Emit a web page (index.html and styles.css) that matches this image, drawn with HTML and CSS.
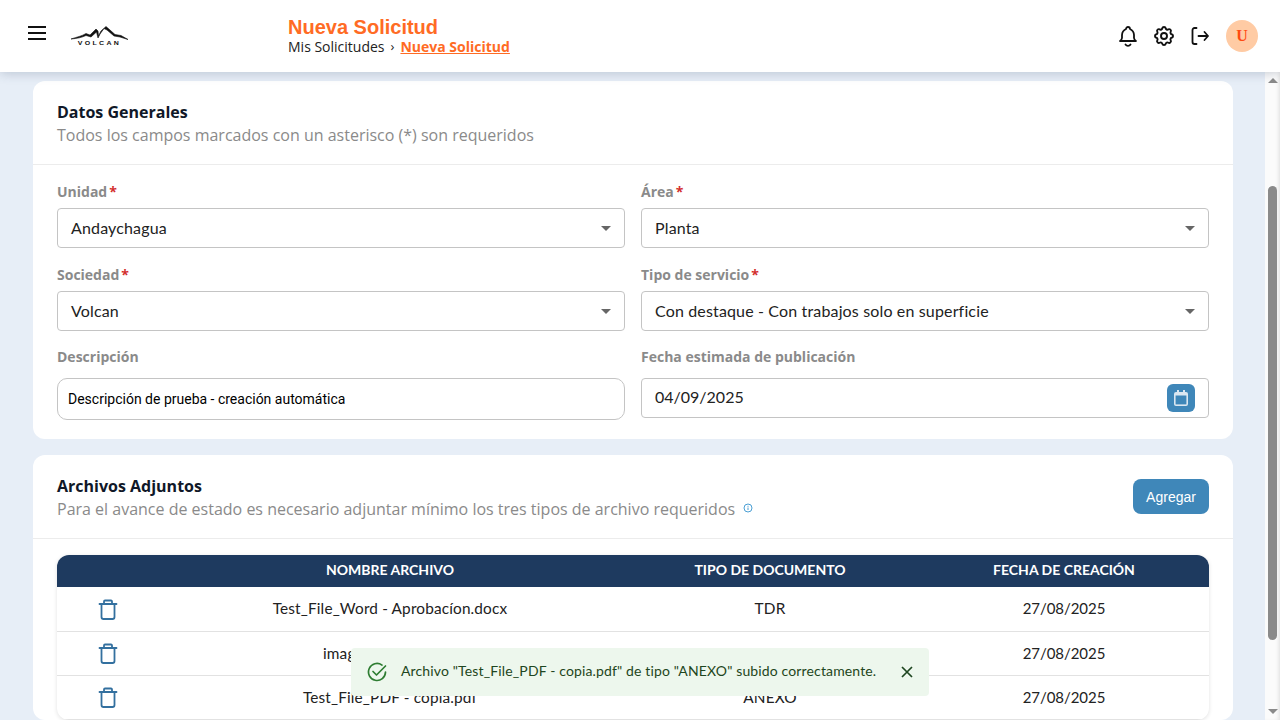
FILE: index.html
```html
<!DOCTYPE html>
<html lang="es">
<head>
<meta charset="utf-8">
<title>Nueva Solicitud</title>
<link rel="stylesheet" href="styles.css">
</head>
<body>
<div class="app">
  <header class="topbar">
    <div class="brand">
      <svg class="menu-icon" viewBox="0 0 18 14" width="18" height="14"><path d="M0 1h18M0 7h18M0 13h18" stroke="#111" stroke-width="2"/></svg>
      <div class="logo">
        <svg viewBox="0 0 57 15" width="57" height="15"><path d="M0 14C6 12 11 11 15 8.500L19 10 25 4 27 6 27.500 11 30 6 35 1.500 39 5 44 9.500 50 10.500 57 14.500 49 12 43 11 36 5 33 3.500 29 9 27 13 25.500 7 20 12 15 10.500C11 12.500 6 13.500 0 14Z" fill="#111" stroke="#111" stroke-width=".6"/></svg>
        <span class="logo-text">VOLCAN</span>
      </div>
    </div>
    <div class="heading">
      <h1 class="page-title">Nueva Solicitud</h1>
      <nav class="crumbs"><span>Mis Solicitudes</span><span class="crumb-sep">›</span><a class="crumb-current">Nueva Solicitud</a></nav>
    </div>
    <div class="actions">
      <svg class="action" viewBox="0 0 24 24" width="24" height="24" fill="none" stroke="#111" stroke-width="1.800" stroke-linecap="round" stroke-linejoin="round"><path d="M10 5a2 2 0 1 1 4 0 7 7 0 0 1 4 6v3a4 4 0 0 0 2 3H4a4 4 0 0 0 2-3v-3a7 7 0 0 1 4-6"/><path d="M9.500 20.500a3 3 0 0 0 5 0"/></svg>
      <svg class="action" viewBox="0 0 24 24" width="24" height="24" fill="none" stroke="#111" stroke-width="1.900" stroke-linecap="round" stroke-linejoin="round"><path d="M10.300 4.300c.4-1.800 3-1.800 3.400 0a1.700 1.700 0 0 0 2.600 1.100c1.500-.9 3.300.8 2.400 2.400a1.700 1.700 0 0 0 1 2.500c1.800.4 1.800 3 0 3.400a1.700 1.700 0 0 0-1 2.600c.9 1.500-.9 3.300-2.400 2.400a1.700 1.700 0 0 0-2.600 1c-.4 1.800-3 1.800-3.400 0a1.700 1.700 0 0 0-2.600-1c-1.500.9-3.300-.9-2.400-2.400a1.700 1.700 0 0 0-1-2.600c-1.800-.4-1.800-3 0-3.400a1.700 1.700 0 0 0 1-2.500c-.9-1.600.9-3.300 2.400-2.400a1.700 1.700 0 0 0 2.600-1.100Z"/><circle cx="12" cy="12" r="3"/></svg>
      <svg class="action" viewBox="0 0 24 24" width="24" height="24" fill="none" stroke="#111" stroke-width="1.800" stroke-linecap="round" stroke-linejoin="round"><path d="M8.500 4H6.500a2 2 0 0 0-2 2v12a2 2 0 0 0 2 2h2"/><path d="M10.500 12H20M16.500 8l3.500 4-3.500 4"/></svg>
      <div class="avatar">U</div>
    </div>
  </header>

  <div class="viewport">
    <main class="content">
      <section class="card card-form">
        <div class="card-head">
          <div>
            <h2 class="card-title">Datos Generales</h2>
            <p class="card-sub">Todos los campos marcados con un asterisco (*) son requeridos</p>
          </div>
        </div>
        <div class="form-grid">
          <div class="field">
            <label class="label">Unidad<span class="req">*</span></label>
            <div class="control select"><span>Andaychagua</span><i class="caret"></i></div>
          </div>
          <div class="field">
            <label class="label">Área<span class="req">*</span></label>
            <div class="control select"><span>Planta</span><i class="caret"></i></div>
          </div>
          <div class="field">
            <label class="label">Sociedad<span class="req">*</span></label>
            <div class="control select"><span>Volcan</span><i class="caret"></i></div>
          </div>
          <div class="field">
            <label class="label">Tipo de servicio<span class="req">*</span></label>
            <div class="control select"><span>Con destaque - Con trabajos solo en superficie</span><i class="caret"></i></div>
          </div>
          <div class="field field-last">
            <label class="label">Descripción</label>
            <div class="control textbox"><span>Descripción de prueba - creación automática</span></div>
          </div>
          <div class="field field-last">
            <label class="label">Fecha estimada de publicación</label>
            <div class="control date"><span>04/09/2025</span>
              <button class="cal-btn" type="button" aria-label="Calendario">
                <svg viewBox="0 0 14 16" width="14" height="16"><path d="M2 2h10a2 2 0 0 1 2 2v10a2 2 0 0 1-2 2H2a2 2 0 0 1-2-2V4a2 2 0 0 1 2-2Z" fill="#dbe7f1"/><rect x="3" y="0" width="2" height="3" fill="#dbe7f1"/><rect x="9" y="0" width="2" height="3" fill="#dbe7f1"/><rect x="1.600" y="5.500" width="10.800" height="8.900" fill="#3f87b9"/></svg>
              </button>
            </div>
          </div>
        </div>
      </section>

      <section class="card card-files">
        <div class="card-head files-head">
          <div>
            <h2 class="card-title">Archivos Adjuntos</h2>
            <p class="card-sub">Para el avance de estado es necesario adjuntar mínimo los tres tipos de archivo requeridos
              <svg class="info" viewBox="0 0 10 10" width="10" height="10" fill="none" stroke="#4a9fd4" stroke-width="1"><circle cx="5" cy="5" r="4"/><path d="M5 4.500V7M5 2.800v1"/></svg>
            </p>
          </div>
          <button class="add-btn" type="button">Agregar</button>
        </div>
        <div class="table-wrap">
          <div class="table">
            <div class="row row-head"><div></div><div>NOMBRE ARCHIVO</div><div>TIPO DE DOCUMENTO</div><div>FECHA DE CREACIÓN</div></div>
            <div class="row">
              <div class="cell-action"><svg class="trash" viewBox="0 0 20 22" width="20" height="22" fill="none" stroke="#33709f" stroke-width="1.800" stroke-linecap="round" stroke-linejoin="round"><path d="M1.500 5h17M3.500 5v13a2 2 0 0 0 2 2h9a2 2 0 0 0 2-2V5M6 5V2.500a1 1 0 0 1 1-1h6a1 1 0 0 1 1 1V5"/></svg></div>
              <div>Test_File_Word - Aprobacíon.docx</div><div>TDR</div><div class="cell-date">27/08/2025</div>
            </div>
            <div class="row">
              <div class="cell-action"><svg class="trash" viewBox="0 0 20 22" width="20" height="22" fill="none" stroke="#33709f" stroke-width="1.800" stroke-linecap="round" stroke-linejoin="round"><path d="M1.500 5h17M3.500 5v13a2 2 0 0 0 2 2h9a2 2 0 0 0 2-2V5M6 5V2.500a1 1 0 0 1 1-1h6a1 1 0 0 1 1 1V5"/></svg></div>
              <div>imagen_prueba.png</div><div>BASES</div><div class="cell-date">27/08/2025</div>
            </div>
            <div class="row">
              <div class="cell-action"><svg class="trash" viewBox="0 0 20 22" width="20" height="22" fill="none" stroke="#33709f" stroke-width="1.800" stroke-linecap="round" stroke-linejoin="round"><path d="M1.500 5h17M3.500 5v13a2 2 0 0 0 2 2h9a2 2 0 0 0 2-2V5M6 5V2.500a1 1 0 0 1 1-1h6a1 1 0 0 1 1 1V5"/></svg></div>
              <div>Test_File_PDF - copia.pdf</div><div>ANEXO</div><div class="cell-date">27/08/2025</div>
            </div>
          </div>
        </div>
      </section>
    </main>
    <div class="scrollbar"><i class="arrow-up"></i><i class="thumb"></i><i class="arrow-down"></i></div>
  </div>

  <div class="toast">
    <svg class="toast-icon" viewBox="0 0 20 20" width="20" height="20" fill="none" stroke="#2e7d32" stroke-width="1.700" stroke-linecap="round" stroke-linejoin="round"><path d="M18.500 10a8.500 8.500 0 1 1-3.500-6.900"/><path d="M6 9.500l3.500 3.500 9-9"/></svg>
    <span class="toast-msg">Archivo "Test_File_PDF - copia.pdf" de tipo "ANEXO" subido correctamente.</span>
    <svg class="toast-close" viewBox="0 0 12 12" width="12" height="12" fill="none" stroke="#1e4620" stroke-width="1.700"><path d="M1 1l10 10M11 1L1 11"/></svg>
  </div>
</div>
</body>
</html>
```
FILE: styles.css
```css
* { box-sizing: border-box; }
html, body { margin: 0; height: 100%; overflow: hidden; }
body { font-family: "Open Sans", sans-serif; color: #111; background: #e7eef7; }
.app { width: 1280px; height: 720px; display: flex; flex-direction: column; position: relative; overflow: hidden; }

.topbar { height: 72px; flex: none; background: #fff; display: flex; align-items: center; padding: 0 22px 0 28px; box-shadow: 0 2px 10px rgba(50, 70, 100, .22); position: relative; z-index: 2; }
.brand { width: 260px; display: flex; align-items: center; gap: 25px; margin-top: -6px; }
.menu-icon { display: block; }
.logo { width: 57px; display: flex; flex-direction: column; align-items: center; margin-top: 4px; }
.logo svg { display: block; }
.logo-text { font: 700 7px/6px "Liberation Sans", sans-serif; letter-spacing: 2.300px; color: #111; transform: scaleY(.8); }
.heading { flex: 1; margin-top: -1px; }
.page-title { margin: 1px 0 -1px; font: 700 20px/22px "Liberation Sans", sans-serif; color: #ff6b24; }
.crumbs { display: flex; align-items: center; font-size: 14px; line-height: 19px; color: #222; }
.crumb-sep { margin: 0 6px; font-size: 13px; }
.crumb-current { color: #ff6b24; font-weight: 700; text-decoration: underline; }
.actions { display: flex; align-items: center; gap: 12px; }
.action { display: block; }
.avatar { width: 32px; height: 32px; margin-left: 2px; border-radius: 50%; background: #ffcba4; color: #ff4a10; display: flex; align-items: center; justify-content: center; font: 700 16px "Liberation Serif", serif; }

.viewport { flex: 1; min-height: 0; display: flex; }
.content { flex: 1; min-width: 0; overflow: hidden; padding: 9px 32px 0 33px; }
.card { background: #fff; border-radius: 12px; }
.card-form { height: 358px; margin-bottom: 16px; }
.card-head { padding: 19px 24px 16px 24px; border-bottom: 1px solid #ececec; height: 84px; }
.card-title { margin: 0; font-size: 16px; line-height: 24px; font-weight: 700; color: #101828; }
.card-sub { margin: 0; font-size: 16px; line-height: 23px; color: #8a8a8a; }
.form-grid { display: grid; grid-template-columns: 568px 568px; column-gap: 16px; padding: 17px 24px 0; }
.field { height: 83px; display: flex; flex-direction: column; }
.field-last { height: auto; }
.label { font-size: 14px; line-height: 20px; font-weight: 700; color: #8a8a8a; margin-bottom: 6px; }
.req { color: #d32f2f; margin-left: 2px; }
.control { height: 40px; border: 1px solid #c4c4c4; border-radius: 4px; display: flex; align-items: center; padding: 0 13px; font-family: "Lato", sans-serif; font-size: 16px; letter-spacing: .15px; color: #222; }
.select { justify-content: space-between; padding-right: 13px; }
.select span { margin-bottom: 2px; }
.caret { width: 0; height: 0; border-left: 5px solid transparent; border-right: 5px solid transparent; border-top: 5px solid #666; }
.field-last .label { margin-bottom: 11px; margin-top: -1px; }
.textbox { height: 42px; border-radius: 10px; padding: 0 10px; font: 14px "Roboto", sans-serif; letter-spacing: 0; color: #000; }
.date { justify-content: space-between; padding-right: 13px; letter-spacing: 0; }
.date span { margin-bottom: 4px; }
.cal-btn { width: 28px; height: 28px; border: 0; border-radius: 6px; background: #3f87b9; padding: 0; display: flex; align-items: center; justify-content: center; }

.files-head { display: flex; justify-content: space-between; align-items: flex-start; }
.info { vertical-align: 2px; margin-left: 4px; }
.add-btn { width: 76px; height: 35px; margin-top: 5px; border: 0; border-radius: 8px; background: #3f87b9; color: #fff; font: 14px "Liberation Sans", sans-serif; }
.table-wrap { padding: 16px 24px 0; }
.table { border-radius: 12px; overflow: hidden; background: #fff; box-shadow: 0 1px 4px rgba(0, 0, 0, .12); }
.row { display: grid; grid-template-columns: 102px 462px 298px 290px; height: 44px; border-bottom: 1px solid #e2e2e2; align-items: center; text-align: center; font-family: "Lato", sans-serif; font-size: 15.360px; letter-spacing: .15px; color: #222; padding-bottom: 2px; }
.row > div { display: flex; justify-content: center; align-items: center; }
.row > .cell-action { margin-top: 3px; }
.row > .cell-date { font-size: 15px; letter-spacing: -.05px; }
.row-head + .row { height: 45px; }
.row-head { height: 32px; background: #1e3a5f; color: #fff; font-weight: 700; font-size: 14px; letter-spacing: 0; border-bottom: 0; padding-bottom: 4px; }
.trash { display: block; }

.scrollbar { width: 15px; flex: none; background: #fbfbfb; position: relative; display: flex; flex-direction: column; align-items: center; padding: 6px 0; box-shadow: inset -3px 0 4px -2px rgba(0,0,0,.12); }
.arrow-up { width: 0; height: 0; border-left: 5px solid transparent; border-right: 5px solid transparent; border-bottom: 5px solid #8a8a8a; }
.arrow-down { width: 0; height: 0; border-left: 5px solid transparent; border-right: 5px solid transparent; border-top: 5px solid #8a8a8a; margin-top: auto; }
.thumb { width: 9px; height: 454px; background: #8a8a8a; border-radius: 5px; margin-top: 103px; }

.toast { position: absolute; left: 351px; top: 648px; width: 578px; height: 48px; background: #edf7ed; border-radius: 4px; display: flex; align-items: center; padding: 0 16px; z-index: 3; font-family: "Lato", sans-serif; font-size: 14px; letter-spacing: .14px; color: #1e4620; }
.toast-icon { flex: none; }
.toast-msg { margin-left: 14px; margin-bottom: 3px; flex: 1; white-space: nowrap; }
.toast-close { flex: none; margin-left: -1px; }
```
